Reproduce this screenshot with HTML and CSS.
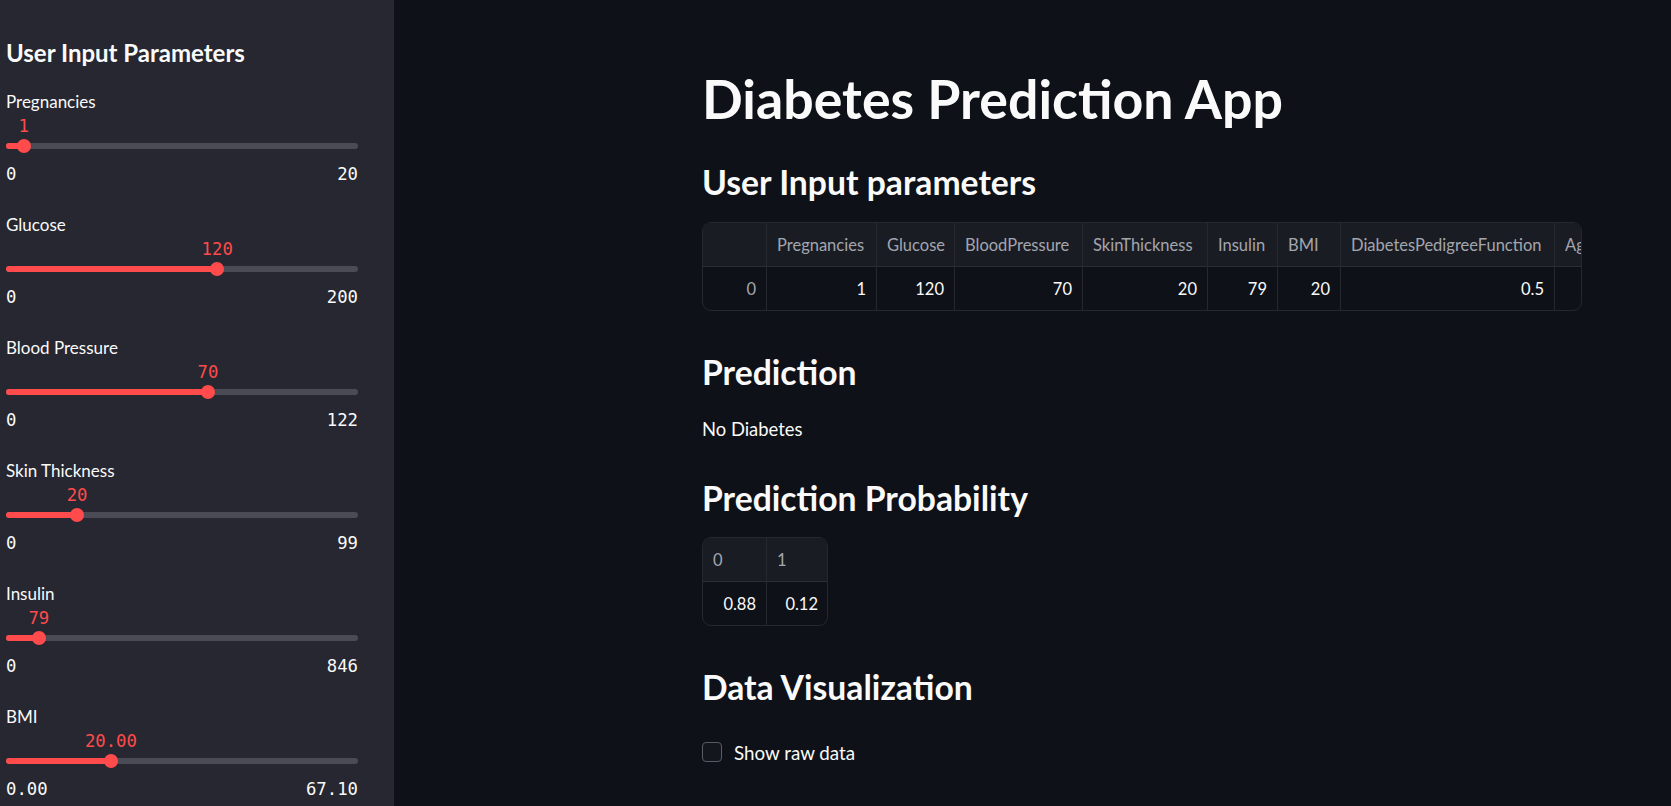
FILE: index.html
```html
<!DOCTYPE html>
<html lang="en">
<head>
<meta charset="utf-8">
<title>Diabetes Prediction App</title>
<link rel="stylesheet" href="styles.css">
</head>
<body>
<aside class="sidebar">
  <h2 class="side-title">User Input Parameters</h2>

  <div class="slider">
    <div class="s-label">Pregnancies</div>
    <div class="s-value-row"><span class="s-value" style="left:5%">1</span></div>
    <div class="s-track"><div class="s-fill" style="width:5%"></div><div class="s-thumb" style="left:5%"></div></div>
    <div class="s-range"><span>0</span><span>20</span></div>
  </div>

  <div class="slider">
    <div class="s-label">Glucose</div>
    <div class="s-value-row"><span class="s-value" style="left:60%">120</span></div>
    <div class="s-track"><div class="s-fill" style="width:60%"></div><div class="s-thumb" style="left:60%"></div></div>
    <div class="s-range"><span>0</span><span>200</span></div>
  </div>

  <div class="slider">
    <div class="s-label">Blood Pressure</div>
    <div class="s-value-row"><span class="s-value" style="left:57.38%">70</span></div>
    <div class="s-track"><div class="s-fill" style="width:57.38%"></div><div class="s-thumb" style="left:57.38%"></div></div>
    <div class="s-range"><span>0</span><span>122</span></div>
  </div>

  <div class="slider">
    <div class="s-label">Skin Thickness</div>
    <div class="s-value-row"><span class="s-value" style="left:20.2%">20</span></div>
    <div class="s-track"><div class="s-fill" style="width:20.2%"></div><div class="s-thumb" style="left:20.2%"></div></div>
    <div class="s-range"><span>0</span><span>99</span></div>
  </div>

  <div class="slider">
    <div class="s-label">Insulin</div>
    <div class="s-value-row"><span class="s-value" style="left:9.34%">79</span></div>
    <div class="s-track"><div class="s-fill" style="width:9.34%"></div><div class="s-thumb" style="left:9.34%"></div></div>
    <div class="s-range"><span>0</span><span>846</span></div>
  </div>

  <div class="slider">
    <div class="s-label">BMI</div>
    <div class="s-value-row"><span class="s-value" style="left:29.81%">20.00</span></div>
    <div class="s-track"><div class="s-fill" style="width:29.81%"></div><div class="s-thumb" style="left:29.81%"></div></div>
    <div class="s-range"><span>0.00</span><span>67.10</span></div>
  </div>
</aside>

<main class="main">
  <div class="content">
    <h1 class="title">Diabetes Prediction App</h1>

    <h3 class="sub sub-first">User Input parameters</h3>
    <div class="df df-wide">
      <div class="df-grid df-grid-wide">
        <div class="th"></div>
        <div class="th">Pregnancies</div>
        <div class="th">Glucose</div>
        <div class="th">BloodPressure</div>
        <div class="th">SkinThickness</div>
        <div class="th">Insulin</div>
        <div class="th">BMI</div>
        <div class="th">DiabetesPedigreeFunction</div>
        <div class="th">Age</div>

        <div class="td idx">0</div>
        <div class="td">1</div>
        <div class="td">120</div>
        <div class="td">70</div>
        <div class="td">20</div>
        <div class="td">79</div>
        <div class="td">20</div>
        <div class="td">0.5</div>
        <div class="td">30</div>
      </div>
    </div>

    <h3 class="sub sub-pred">Prediction</h3>
    <p class="text">No Diabetes</p>

    <h3 class="sub sub-prob">Prediction Probability</h3>
    <div class="df df-small">
      <div class="df-grid df-grid-small">
        <div class="th">0</div>
        <div class="th">1</div>
        <div class="td">0.88</div>
        <div class="td">0.12</div>
      </div>
    </div>

    <h3 class="sub sub-viz">Data Visualization</h3>
    <label class="check">
      <span class="box"></span>
      <span class="check-label">Show raw data</span>
    </label>
  </div>
</main>
</body>
</html>
```

FILE: styles.css
```css
* { box-sizing: border-box; }

html, body {
  margin: 0;
  padding: 0;
  height: 100%;
}

body {
  display: flex;
  background: #0e1117;
  color: #fafafa;
  font-family: Lato, "Open Sans", sans-serif;
  overflow: hidden;
}

/* ---------- Sidebar ---------- */
.sidebar {
  width: 394px;
  flex: 0 0 394px;
  height: 806px;
  background: #262730;
  padding: 38px 36px 0 6px;
}

.side-title {
  margin: 0 0 22px;
  font-size: 24px;
  line-height: 30px;
  font-weight: 700;
  color: #fafafa;
}

.slider {
  margin-bottom: 27px;
}

.s-label {
  font-size: 17px;
  line-height: 24px;
  height: 24px;
  color: #fafafa;
}

.s-value-row {
  position: relative;
  height: 24px;
}

.s-value {
  position: absolute;
  top: 0;
  transform: translateX(-50%);
  font-family: "DejaVu Sans Mono", "Liberation Mono", monospace;
  font-size: 17.3px;
  line-height: 24px;
  color: #ff4b4b;
  white-space: nowrap;
}

.s-track {
  position: relative;
  height: 16px;
  margin-bottom: 8px;
}

.s-track::before {
  content: "";
  position: absolute;
  left: 0;
  right: 0;
  top: 5px;
  height: 6px;
  border-radius: 3px;
  background: #4a4b55;
}

.s-fill {
  position: absolute;
  left: 0;
  top: 5px;
  height: 6px;
  border-radius: 3px;
  background: #ff4b4b;
}

.s-thumb {
  position: absolute;
  top: 1px;
  width: 14px;
  height: 14px;
  margin-left: -7px;
  border-radius: 50%;
  background: #ff4b4b;
}

.s-range {
  display: flex;
  justify-content: space-between;
  font-family: "DejaVu Sans Mono", "Liberation Mono", monospace;
  font-size: 17.3px;
  line-height: 24px;
  height: 24px;
  color: #fafafa;
}

/* ---------- Main ---------- */
.main {
  flex: 1;
  height: 806px;
  padding: 66px 0 0 308px;
}

.content {
  width: 880px;
}

.title {
  margin: 0;
  font-size: 53.7px;
  line-height: 64px;
  font-weight: 700;
  color: #fafafa;
}

.sub {
  margin: 0;
  font-size: 33.7px;
  line-height: 44px;
  font-weight: 700;
  color: #fafafa;
}

.sub-first { margin-top: 30px; margin-bottom: 18px; }
.sub-pred { margin-top: 39px; margin-bottom: 22px; }
.sub-prob { margin-top: 34px; margin-bottom: 17px; }
.sub-viz { margin-top: 39px; margin-bottom: 31px; }

.text {
  margin: 0;
  font-size: 18.4px;
  line-height: 26px;
}

/* ---------- Dataframes ---------- */
.df {
  border: 1px solid #26282f;
  border-radius: 9px;
  overflow: hidden;
  background: #0e1117;
}

.df-wide { width: 880px; }
.df-small { width: 126px; }

.df-grid {
  display: grid;
  grid-template-rows: 44px 43px;
}

.df-grid-wide {
  grid-template-columns: 64px 110px 78px 128px 125px 70px 63px 214px 60px;
  width: 912px;
}

.df-grid-small {
  grid-template-columns: 64px 61px;
}

.th, .td {
  font-size: 16.5px;
  display: flex;
  align-items: center;
  padding: 0 10px;
  border-right: 1px solid #26282f;
  white-space: nowrap;
}

.th {
  background: #1a1c24;
  color: #a3a6ae;
  border-bottom: 1px solid #2c2e36;
}

.td {
  justify-content: flex-end;
  color: #fafafa;
}

.td.idx { color: #a3a6ae; }

.df-grid-small .th:nth-child(2),
.df-grid-small .td:nth-child(4) { border-right: none; }

/* ---------- Checkbox ---------- */
.check {
  display: flex;
  align-items: center;
  gap: 12px;
  height: 24px;
}

.box {
  width: 20px;
  height: 20px;
  border: 1px solid #5b5d66;
  border-radius: 4px;
  background: #13161d;
}

.check-label {
  font-size: 18.8px;
  color: #fafafa;
}
```
